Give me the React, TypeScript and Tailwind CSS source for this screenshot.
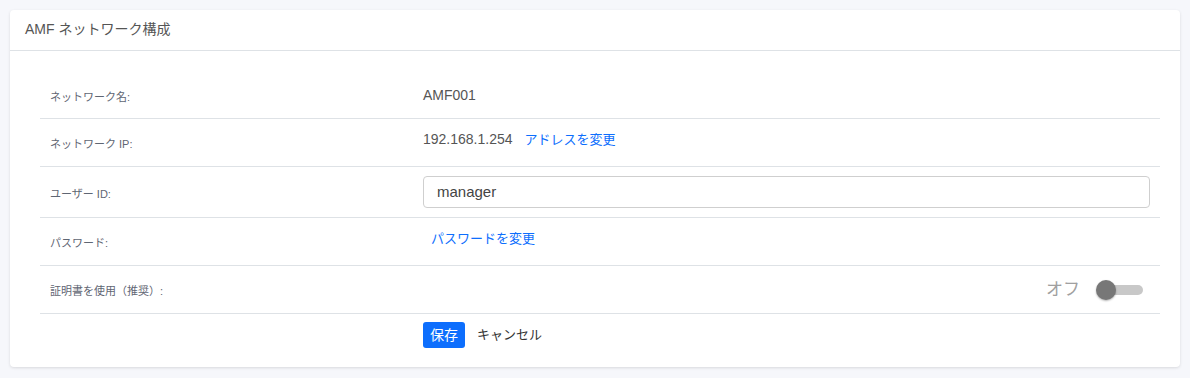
import React from "react";

const jp = { fontFamily: '"Liberation Sans", "Noto Sans CJK JP", sans-serif' };

function Row({ label, h, children, last }: { label: string; h: string; children?: React.ReactNode; last?: boolean }) {
  return (
    <div className={`flex items-center ${h} ${last ? "" : "border-b border-[#dee2e6]"}`}>
      <div className="w-[383px] shrink-0 pl-[10px] pt-[4px] text-[11px] text-[#5f6673]">{label}</div>
      <div className="flex flex-1 items-center pr-[10px]">{children}</div>
    </div>
  );
}

export default function App() {
  return (
    <div className="min-h-[378px] w-[1190px] bg-[#f6f7fb] pt-[10px] pl-[10px]" style={jp}>
      <div className="w-[1170px] rounded-[4px] bg-white shadow-[0_1px_3px_rgba(0,0,0,0.12)]">
        <div className="flex h-[41px] items-center border-b border-[#dee2e6] pl-[15px] pb-[2px] text-[14px] text-[#555]">
          AMF ネットワーク構成
        </div>
        <div className="pl-[30px] pr-[20px] pt-[21px] pb-[11px]">
          <Row label="ネットワーク名:" h="h-[47px]">
            <span className="text-[14px] text-[#555]">AMF001</span>
          </Row>
          <Row label="ネットワーク IP:" h="h-[48px]">
            <span className="-mt-[6px] text-[14px] text-[#555]">192.168.1.254</span>
            <span className="-mt-[6px] ml-[12px] text-[13px] text-[#0d6efd]">アドレスを変更</span>
          </Row>
          <Row label="ユーザー ID:" h="h-[51px]">
            <div className="flex h-[32px] w-full items-center rounded-[4px] border border-[#cfcfcf] pl-[13px] text-[15px] text-[#444]">
              manager
            </div>
          </Row>
          <Row label="パスワード:" h="h-[48px]">
            <span className="-mt-[6px] ml-[8px] text-[13px] text-[#0d6efd]">パスワードを変更</span>
          </Row>
          <Row label="証明書を使用（推奨）:" h="h-[48px]">
            <div className="flex flex-1 items-center justify-end pr-[7px]">
              <span className="mr-[16px] text-[17px] text-[#a0a0a0]">オフ</span>
              <div className="relative h-[20px] w-[47px]">
                <div className="absolute left-[3px] top-[5px] h-[10px] w-[44px] rounded-full bg-[#c8c8c8]" />
                <div className="absolute left-0 top-0 h-[20px] w-[20px] rounded-full bg-[#777] shadow-[0_1px_2px_rgba(0,0,0,0.3)]" />
              </div>
            </div>
          </Row>
          <Row label="" h="h-[42px]" last>
            <span className="flex h-[26px] w-[42px] items-center justify-center rounded-[3px] bg-[#0d6efd] text-[14px] text-white">保存</span>
            <span className="ml-[12px] text-[13px] text-[#333]">キャンセル</span>
          </Row>
        </div>
      </div>
    </div>
  );
}
